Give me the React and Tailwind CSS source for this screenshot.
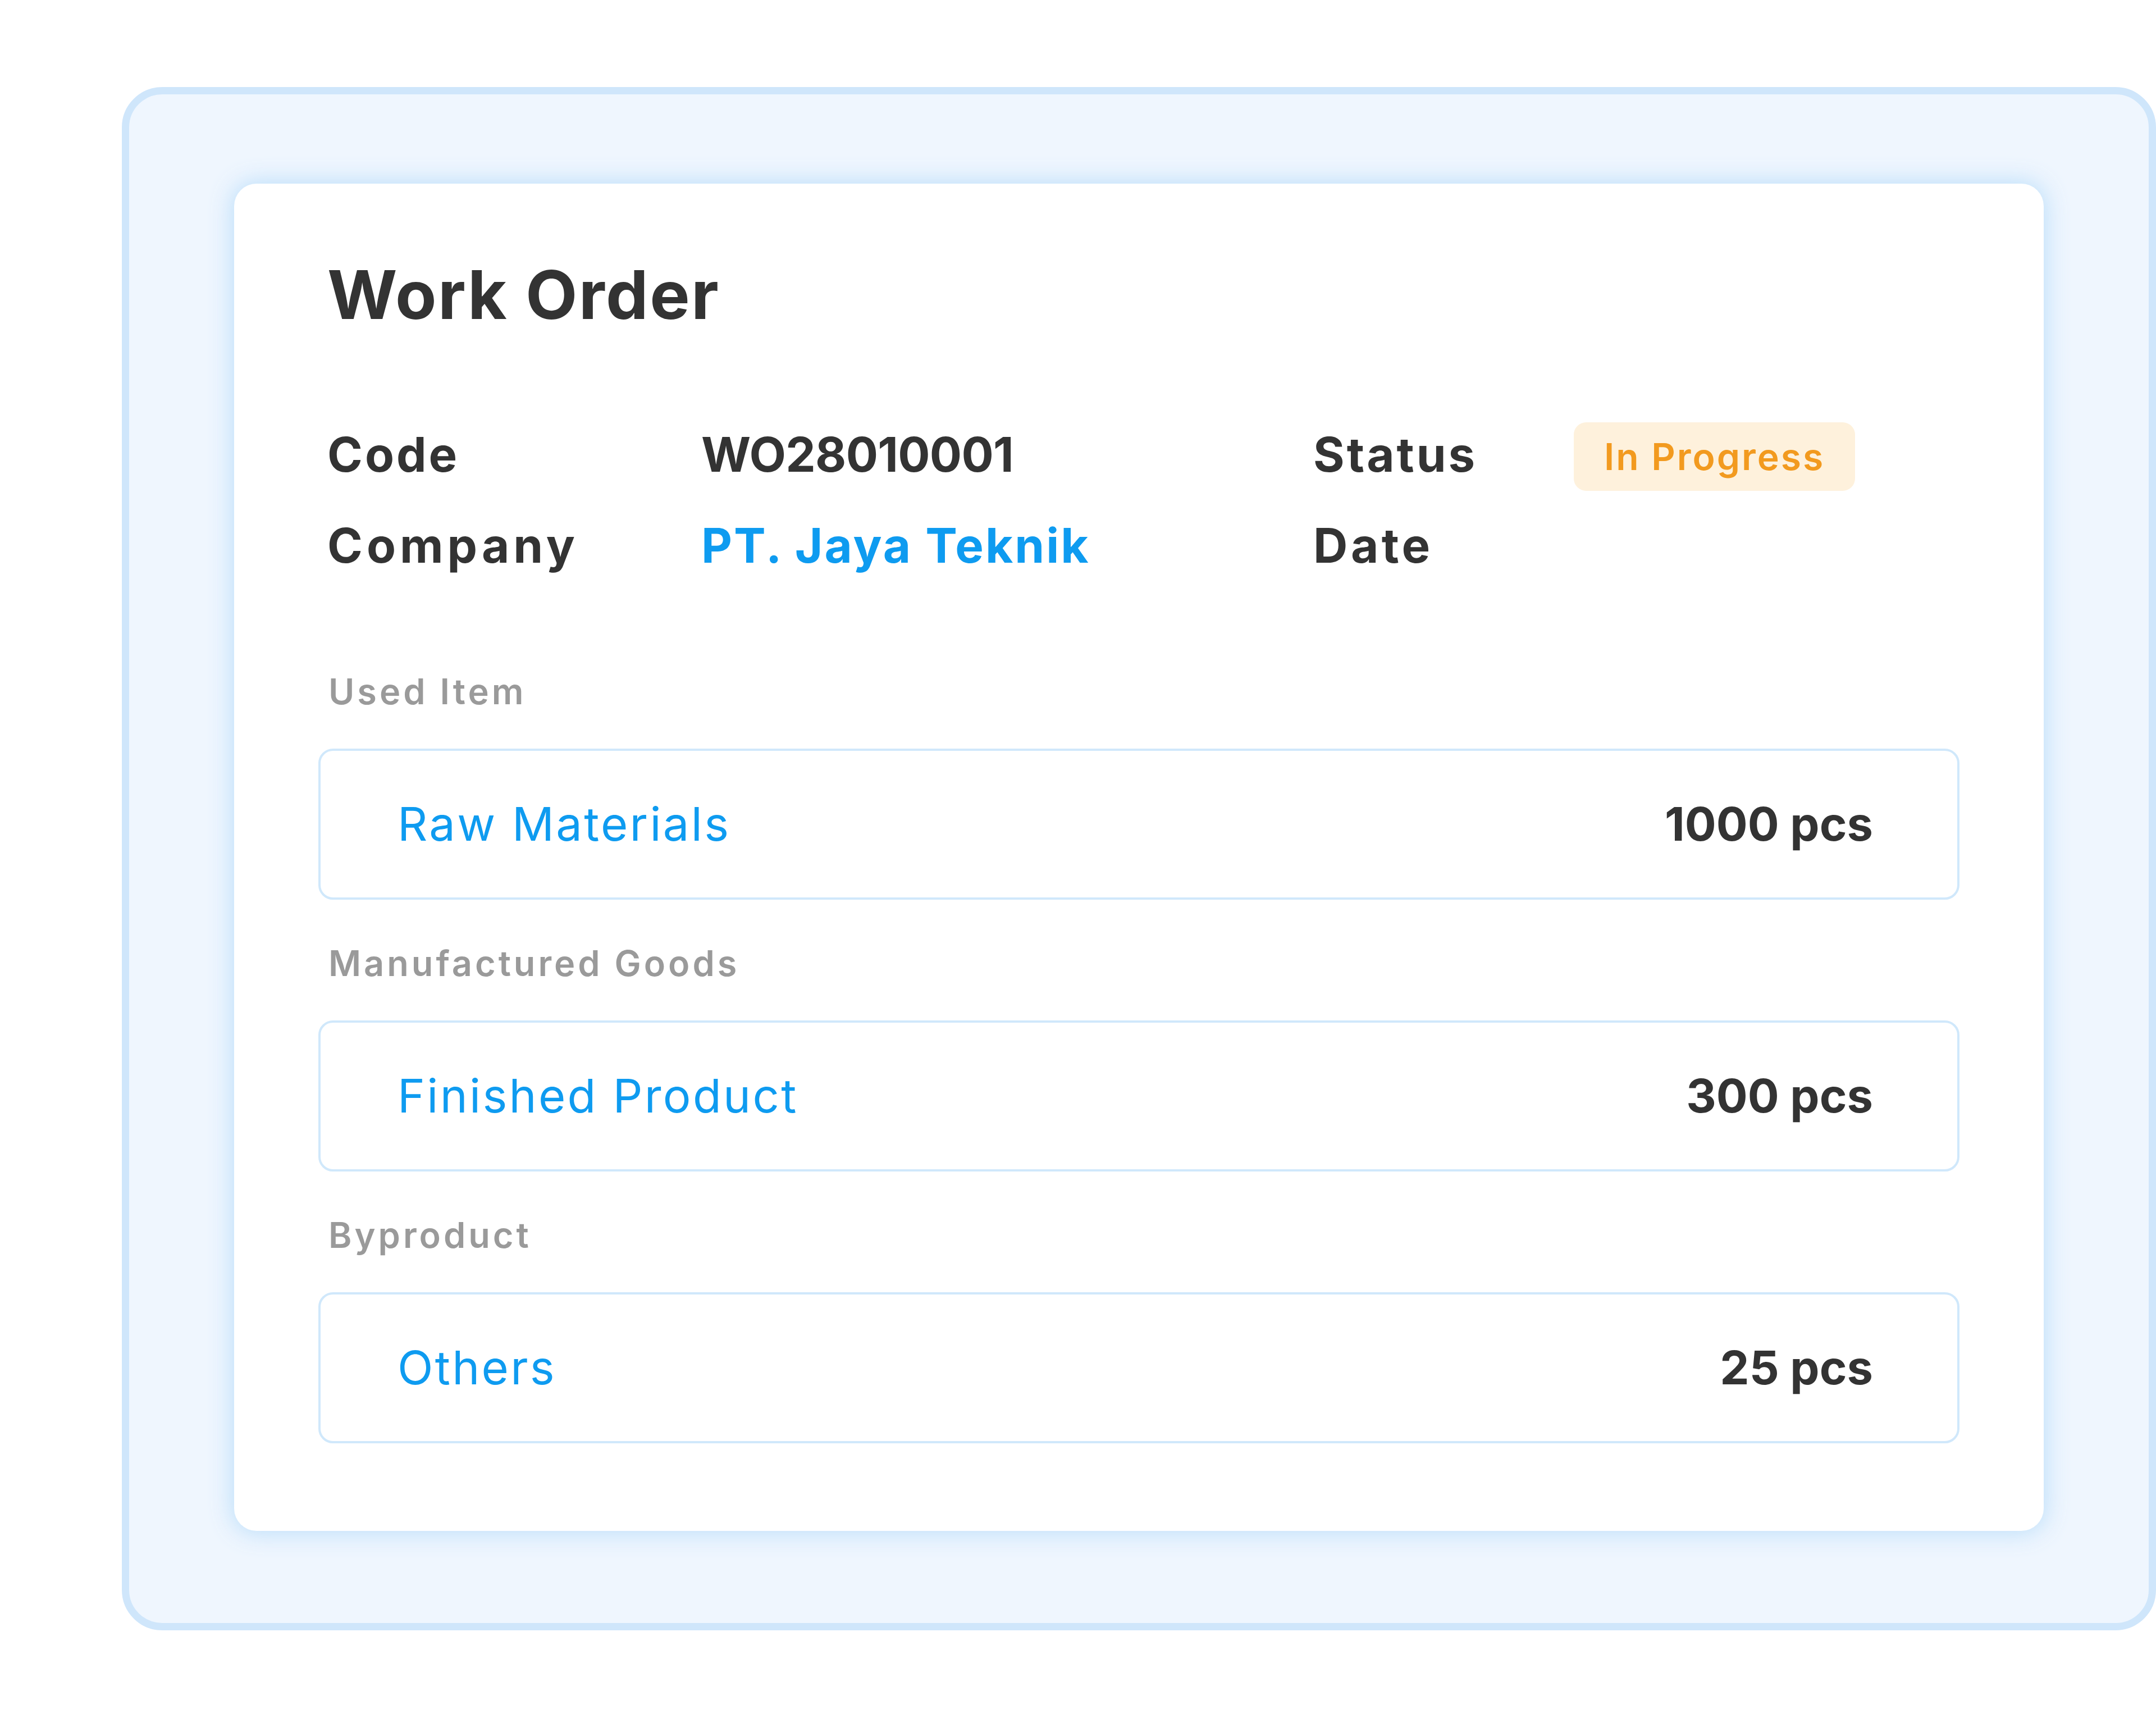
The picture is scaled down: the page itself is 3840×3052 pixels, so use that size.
import React from 'react';

const font = { fontFamily: 'Inter, "Noto Sans", sans-serif' };

const Section = ({ label, name, qty, first }) => (
    <div className={first ? 'mt-[167px]' : 'mt-[82px]'}>
        <div className="ml-[18px] text-[63px] leading-none font-semibold tracking-[5px] text-[#9a9a9a]">{label}</div>
        <div className="mt-[70px] h-[269px] rounded-[26px] border-[4px] border-[#d0e8fb] flex items-center justify-between pl-[137px] pr-[150px]">
            <span className="text-[83px] leading-none font-normal tracking-[3.3px] text-[#0e9bf0]">{name}</span>
            <span className="text-[83px] leading-none font-bold text-[#333333]">{qty}</span>
        </div>
    </div>
);

const WorkOrderCard = () => (
    <div className="w-[3223px] h-[2399px] rounded-[40px] bg-white shadow-[0_0_40px_4px_rgba(180,218,250,0.85)] px-[150px] pt-[138px]">
        <h1 className="ml-[16px] text-[120px] leading-none font-bold tracking-[2.4px] text-[#333333]">Work Order</h1>

        <div className="ml-[16px] mt-[161px] grid grid-cols-[666px_1090px_464px_auto] gap-y-[37px] items-center text-[85px] leading-[122px] font-bold tracking-[4px] text-[#333333]">
            <div>Code</div>
            <div className="tracking-[-0.7px]">WO28010001</div>
            <div>Status</div>
            <div>
                <span className="inline-flex items-center h-[122px] px-[54px] rounded-[22px] bg-[#fef1dc] text-[66px] font-semibold tracking-[3px] text-[#f29a1f]">
                    In Progress
                </span>
            </div>
            <div className="tracking-[7px]">Company</div>
            <div className="tracking-[3px] text-[#0e9bf0]">PT. Jaya Teknik</div>
            <div className="tracking-[5.5px]">Date</div>
            <div></div>
        </div>

        <Section first label="Used Item" name="Raw Materials" qty="1000 pcs" />
        <Section label="Manufactured Goods" name="Finished Product" qty="300 pcs" />
        <Section label="Byproduct" name="Others" qty="25 pcs" />
    </div>
);

export default function App() {
    return (
        <div style={font} className="w-[3840px] h-[3052px] bg-white overflow-hidden pt-[155px] pl-[217px]">
            <div className="w-[3623px] h-[2748px] rounded-[72px] border-[13px] border-[#cfe6fb] bg-[#eff6fe] pl-[187px] pt-[159px]">
                <WorkOrderCard />
            </div>
        </div>
    );
}
